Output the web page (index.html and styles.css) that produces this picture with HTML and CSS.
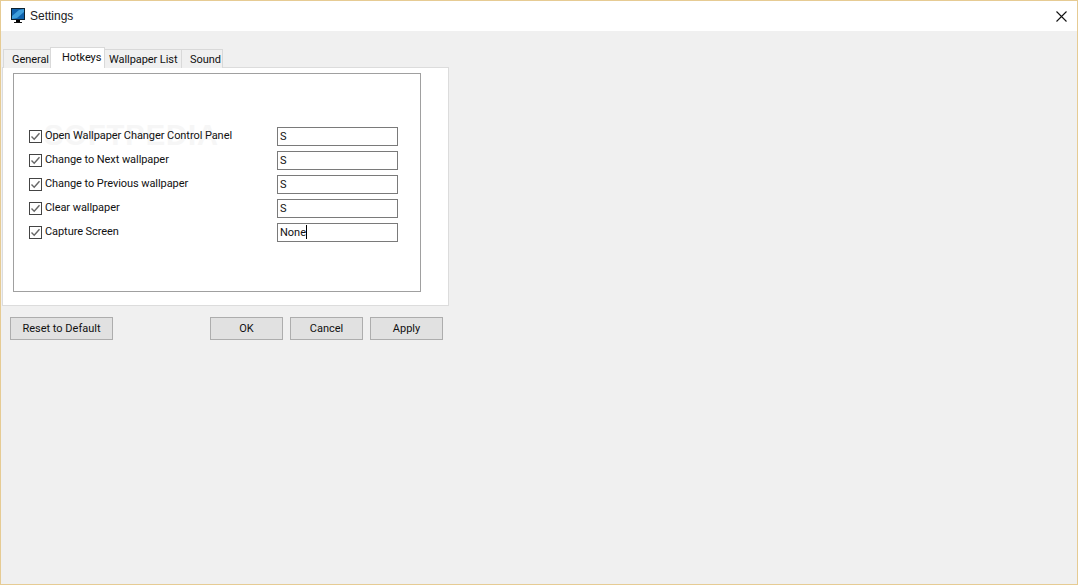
FILE: index.html
```html
<!DOCTYPE html>
<html lang="en">
<head>
    <meta charset="UTF-8">
    <title>Settings</title>
    <link rel="stylesheet" href="styles.css">
</head>
<body>
    <div class="window">
        <!-- Barra de titulo -->
        <div class="titlebar">
            <svg class="app-icon" width="16" height="16" viewBox="0 0 16 16">
                <rect x="1" y="0" width="14" height="12" fill="#0d2230"/>
                <rect x="2" y="1" width="12" height="10" fill="#0f62ad"/>
                <path d="M2 8 L9 2 L14 1 L14 4 L7 10 L2 11 Z" fill="#3f9fdc"/>
                <rect x="6" y="12" width="4" height="2" fill="#000"/>
                <rect x="4" y="14" width="8" height="1" fill="#111"/>
            </svg>
            <span class="title">Settings</span>
            <svg class="close" width="11" height="11" viewBox="0 0 11 11">
                <path d="M0.5 0.5 L10.5 10.5 M10.5 0.5 L0.5 10.5" stroke="#111" stroke-width="1.1" fill="none"/>
            </svg>
        </div>

        <div class="content">
            <!-- Abas -->
            <div class="tabs">
                <div class="tab tab-general">General</div>
                <div class="tab active">Hotkeys</div>
                <div class="tab tab-list">Wallpaper List</div>
                <div class="tab tab-sound">Sound</div>
            </div>

            <div class="panel">
                <div class="group">
                    <div class="watermark">SOFTPEDIA</div>
                    <div class="row">
                        <span class="check"><svg width="11" height="11" viewBox="0 0 11 11"><path d="M1.5 5.5 L4.2 8.2 L9.5 2.2" stroke="#666" stroke-width="1.4" fill="none"/></svg></span>
                        <span class="label">Open Wallpaper Changer Control Panel</span>
                        <div class="field">S</div>
                    </div>
                    <div class="row">
                        <span class="check"><svg width="11" height="11" viewBox="0 0 11 11"><path d="M1.5 5.5 L4.2 8.2 L9.5 2.2" stroke="#666" stroke-width="1.4" fill="none"/></svg></span>
                        <span class="label">Change to Next wallpaper</span>
                        <div class="field">S</div>
                    </div>
                    <div class="row">
                        <span class="check"><svg width="11" height="11" viewBox="0 0 11 11"><path d="M1.5 5.5 L4.2 8.2 L9.5 2.2" stroke="#666" stroke-width="1.4" fill="none"/></svg></span>
                        <span class="label">Change to Previous wallpaper</span>
                        <div class="field">S</div>
                    </div>
                    <div class="row">
                        <span class="check"><svg width="11" height="11" viewBox="0 0 11 11"><path d="M1.5 5.5 L4.2 8.2 L9.5 2.2" stroke="#666" stroke-width="1.4" fill="none"/></svg></span>
                        <span class="label">Clear wallpaper</span>
                        <div class="field">S</div>
                    </div>
                    <div class="row">
                        <span class="check"><svg width="11" height="11" viewBox="0 0 11 11"><path d="M1.5 5.5 L4.2 8.2 L9.5 2.2" stroke="#666" stroke-width="1.4" fill="none"/></svg></span>
                        <span class="label">Capture Screen</span>
                        <div class="field">None<span class="caret"></span></div>
                    </div>
                </div>
            </div>

            <!-- Botoes -->
            <div class="buttons">
                <button class="btn btn-reset">Reset to Default</button>
                <button class="btn">OK</button>
                <button class="btn">Cancel</button>
                <button class="btn">Apply</button>
            </div>
        </div>
    </div>
</body>
</html>
```

FILE: styles.css
```css
* {
    box-sizing: border-box;
}

html, body {
    margin: 0;
    padding: 0;
    height: 100%;
    overflow: hidden;
}

body {
    font-family: Roboto, "Liberation Sans", sans-serif;
    font-size: 11px;
    color: #111;
}

.window {
    height: 100%;
    border: 1px solid #e6cb93;
    background-color: #f0f0f0;
}

/* Barra de titulo */
.titlebar {
    height: 30px;
    background-color: #fff;
    display: flex;
    align-items: center;
    padding: 0 10px 0 9px;
}

.app-icon {
    margin-right: 4px;
}

.title {
    flex: 1;
    font-family: "Liberation Sans", sans-serif;
    font-size: 12px;
    color: #222;
}

/* Abas */
.content {
    padding-top: 16px;
    padding-left: 1px;
}

.tabs {
    display: flex;
    height: 21px;
    padding-left: 1px;
    position: relative;
    z-index: 1;
}

.tab {
    height: 19px;
    margin-top: 2px;
    border: 1px solid #d9d9d9;
    border-bottom: 0;
    background-color: #f0f0f0;
    display: flex;
    align-items: center;
    padding-top: 1px;
    white-space: nowrap;
    letter-spacing: -0.07px;
}

.tab-general {
    width: 47px;
    border-right: 0;
    padding-left: 8px;
}

.tab.active {
    width: 55px;
    height: 21px;
    margin-top: 0;
    background-color: #fff;
    padding-top: 0;
    padding-bottom: 1px;
    padding-left: 11px;
}

.tab-list {
    width: 77px;
    border-left: 0;
    padding-left: 4px;
}

.tab-sound {
    width: 41px;
    border-left: 0;
    padding-left: 8px;
}

.panel {
    width: 447px;
    height: 239px;
    margin-top: -1px;
    background-color: #fff;
    border: 1px solid #dcdcdc;
    padding: 5px 0 0 10px;
}

.group {
    width: 408px;
    height: 219px;
    border: 1px solid #a0a0a0;
    padding: 53px 0 0 15px;
    position: relative;
}

/* marca d'agua bem clara atras da primeira linha */
.watermark {
    position: absolute;
    left: 30px;
    top: 45px;
    font-family: "Liberation Sans", sans-serif;
    font-size: 29px;
    font-weight: bold;
    letter-spacing: 1px;
    color: #f6f6f6;
}

.row {
    display: flex;
    align-items: center;
    height: 19px;
    margin-bottom: 5px;
    position: relative;
}

.check {
    width: 13px;
    height: 13px;
    border: 1px solid #444;
    background-color: #fff;
    margin-right: 3px;
    display: flex;
}

.label {
    width: 232px;
    white-space: nowrap;
    margin-top: -2px;
    letter-spacing: -0.07px;
}

.field {
    width: 121px;
    height: 19px;
    border: 1px solid #7a7a7a;
    background-color: #fff;
    padding-left: 2px;
    line-height: 17px;
}

.caret {
    display: inline-block;
    width: 1px;
    height: 14px;
    background-color: #000;
    vertical-align: -3px;
}

/* Botoes */
.buttons {
    display: flex;
    gap: 7px;
    margin-top: 11px;
    padding-left: 8px;
}

.btn {
    width: 73px;
    height: 23px;
    font-family: inherit;
    font-size: inherit;
    color: #111;
    background-color: #e1e1e1;
    border: 1px solid #adadad;
    padding: 0;
}

.btn-reset {
    width: 103px;
    margin-right: 90px;
}
```
